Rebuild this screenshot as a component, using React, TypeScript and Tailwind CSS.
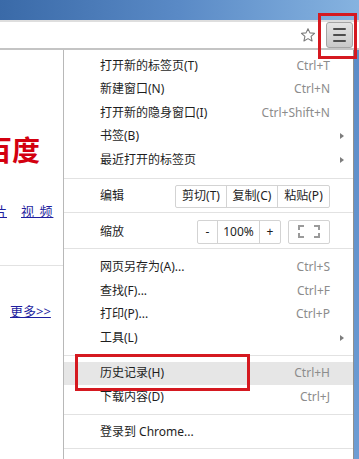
import React from "react";

const font = "font-['Noto_Sans','Noto_Sans_CJK_SC',sans-serif]";

type ItemProps = {
  label: string;
  shortcut?: string;
  arrow?: boolean;
  active?: boolean;
};

const Arrow = () => (
  <span className="h-0 w-0 border-y-[3.5px] border-l-[4px] border-y-transparent border-l-[#7d7d7d]" />
);

const MenuItem: React.FC<ItemProps> = ({ label, shortcut, arrow, active }) => (
  <div
    className={`flex h-[23.5px] items-center pl-[36px] pr-[9px] text-[12px] text-[#1e1e1e] ${
      active ? "bg-[#e6e6e6]" : ""
    }`}
  >
    <span className="flex-1 whitespace-nowrap">{label}</span>
    {shortcut && <span className="text-[#8c8c8c]">{shortcut}</span>}
    <span className="flex w-[14px] justify-end">{arrow && <Arrow />}</span>
  </div>
);

const Sep = ({ cls = "my-[6px]" }: { cls?: string }) => (
  <div className={`h-px bg-[#e2e2e2] ${cls}`} />
);

const FullscreenIcon = () => (
  <svg width="22" height="13" viewBox="0 0 22 13" fill="none">
    <path
      d="M1 5V1H6M16 1H21V5M21 8V12H16M6 12H1V8"
      stroke="#9a9a9a"
      strokeWidth="2"
    />
  </svg>
);

export default function App() {
  return (
    <div className={`relative h-[459px] w-[359px] overflow-hidden bg-white ${font}`}>
      {/* title bar */}
      <div className="h-[20px] bg-gradient-to-r from-[#3a6aa8] via-[#5a8ac6] to-[#86b3e0]" />

      {/* toolbar */}
      <div className="flex h-[30px] items-center border-t-[2px] border-b-[2px] border-t-[#dedede] border-b-[#c4c4c4] bg-white">
        <div className="flex-1" />
        <svg width="16" height="16" viewBox="0 0 24 24" className="mr-[10px]" fill="none">
          <path
            d="M12 2.5l2.9 6.3 6.9.7-5.2 4.6 1.5 6.8L12 17.4l-6.1 3.5 1.5-6.8-5.2-4.6 6.9-.7z"
            stroke="#7a7a7a"
            strokeWidth="1.6"
            strokeLinejoin="round"
          />
        </svg>
        <div className="mr-[6px] flex h-[26px] w-[27px] flex-col items-center justify-center gap-[3.5px] rounded-[3px] border border-[#a5a5a5] bg-gradient-to-b from-[#e4e4e4] to-[#c9c9c9]">
          <span className="h-[2.5px] w-[13px] rounded-full bg-[#4d4d4d]" />
          <span className="h-[2.5px] w-[13px] rounded-full bg-[#4d4d4d]" />
          <span className="h-[2.5px] w-[13px] rounded-full bg-[#4d4d4d]" />
        </div>
      </div>

      {/* body */}
      <div className="flex h-[409px]">
        {/* page behind the menu */}
        <div className="flex w-[63px] flex-col overflow-hidden">
          <div className="ml-[-16px] mt-[86px] whitespace-nowrap text-[28px] font-bold leading-[28px] text-[#d3000f]">
            百度
          </div>
          <div className="mt-[39px] flex whitespace-nowrap text-[13px] leading-[16px] text-[#1f1fa0]">
            <span className="ml-[-6px] underline">片</span>
            <span className="ml-[14px] tracking-[1px] underline">视 频</span>
          </div>
          <div className="mt-[46px] h-px bg-[#e2e2e2]" />
          <div className="ml-[10px] mt-[37px] text-[13px] leading-[16px] text-[#1f1fa0] underline">
            更多&gt;&gt;
          </div>
        </div>

        {/* chrome menu */}
        <div className="w-[291px] border-x border-l-[#b8b8b8] border-r-[#8f8f8f] pt-[4px]">
          <MenuItem label="打开新的标签页(T)" shortcut="Ctrl+T" />
          <MenuItem label="新建窗口(N)" shortcut="Ctrl+N" />
          <MenuItem label="打开新的隐身窗口(I)" shortcut="Ctrl+Shift+N" />
          <MenuItem label="书签(B)" arrow />
          <MenuItem label="最近打开的标签页" arrow />
          <Sep cls="mt-[6px] mb-[6px]" />

          <div className="flex h-[23px] items-center pl-[36px] pr-[9px] text-[12px] text-[#1e1e1e]">
            <span className="flex-1">编辑</span>
            <div className="flex h-[23px] rounded-[2px] border border-[#d3d3d3]">
              <span className="flex w-[51px] items-center justify-center border-r border-[#d3d3d3]">剪切(T)</span>
              <span className="flex w-[51px] items-center justify-center border-r border-[#d3d3d3]">复制(C)</span>
              <span className="flex w-[51px] items-center justify-center">粘贴(P)</span>
            </div>
            <span className="w-[14px]" />
          </div>
          <Sep cls="mt-[4px] mb-[7px]" />

          <div className="flex h-[24px] items-center pl-[36px] pr-[9px] text-[12px] text-[#1e1e1e]">
            <span className="flex-1">缩放</span>
            <div className="flex h-[24px] rounded-[2px] border border-[#d3d3d3]">
              <span className="flex w-[20px] items-center justify-center border-r border-[#d3d3d3]">-</span>
              <span className="flex w-[42px] items-center justify-center border-r border-[#d3d3d3]">100%</span>
              <span className="flex w-[20px] items-center justify-center">+</span>
            </div>
            <div className="ml-[7px] flex h-[24px] w-[42px] items-center justify-center rounded-[2px] border border-[#d3d3d3]">
              <FullscreenIcon />
            </div>
            <span className="w-[14px]" />
          </div>
          <Sep cls="mt-[4px] mb-[7px]" />

          <MenuItem label="网页另存为(A)..." shortcut="Ctrl+S" />
          <MenuItem label="查找(F)..." shortcut="Ctrl+F" />
          <MenuItem label="打印(P)..." shortcut="Ctrl+P" />
          <MenuItem label="工具(L)" arrow />
          <Sep cls="mt-[5px] mb-[6px]" />

          <MenuItem label="历史记录(H)" shortcut="Ctrl+H" active />
          <MenuItem label="下载内容(D)" shortcut="Ctrl+J" />
          <Sep cls="mt-[5px] mb-[6px]" />

          <MenuItem label="登录到 Chrome..." />
          <Sep cls="mt-[4px]" />
        </div>

        {/* window frame */}
        <div className="w-[5px] bg-gradient-to-b from-[#5b8cc8] to-[#6d9dd4]" />
      </div>

      {/* annotation boxes */}
      <div className="absolute left-[318px] top-[13px] h-[46px] w-[39px] border-[3px] border-[#d51920]" />
      <div className="absolute left-[75px] top-[354px] h-[37px] w-[175px] border-[3px] border-[#d51920]" />
    </div>
  );
}
